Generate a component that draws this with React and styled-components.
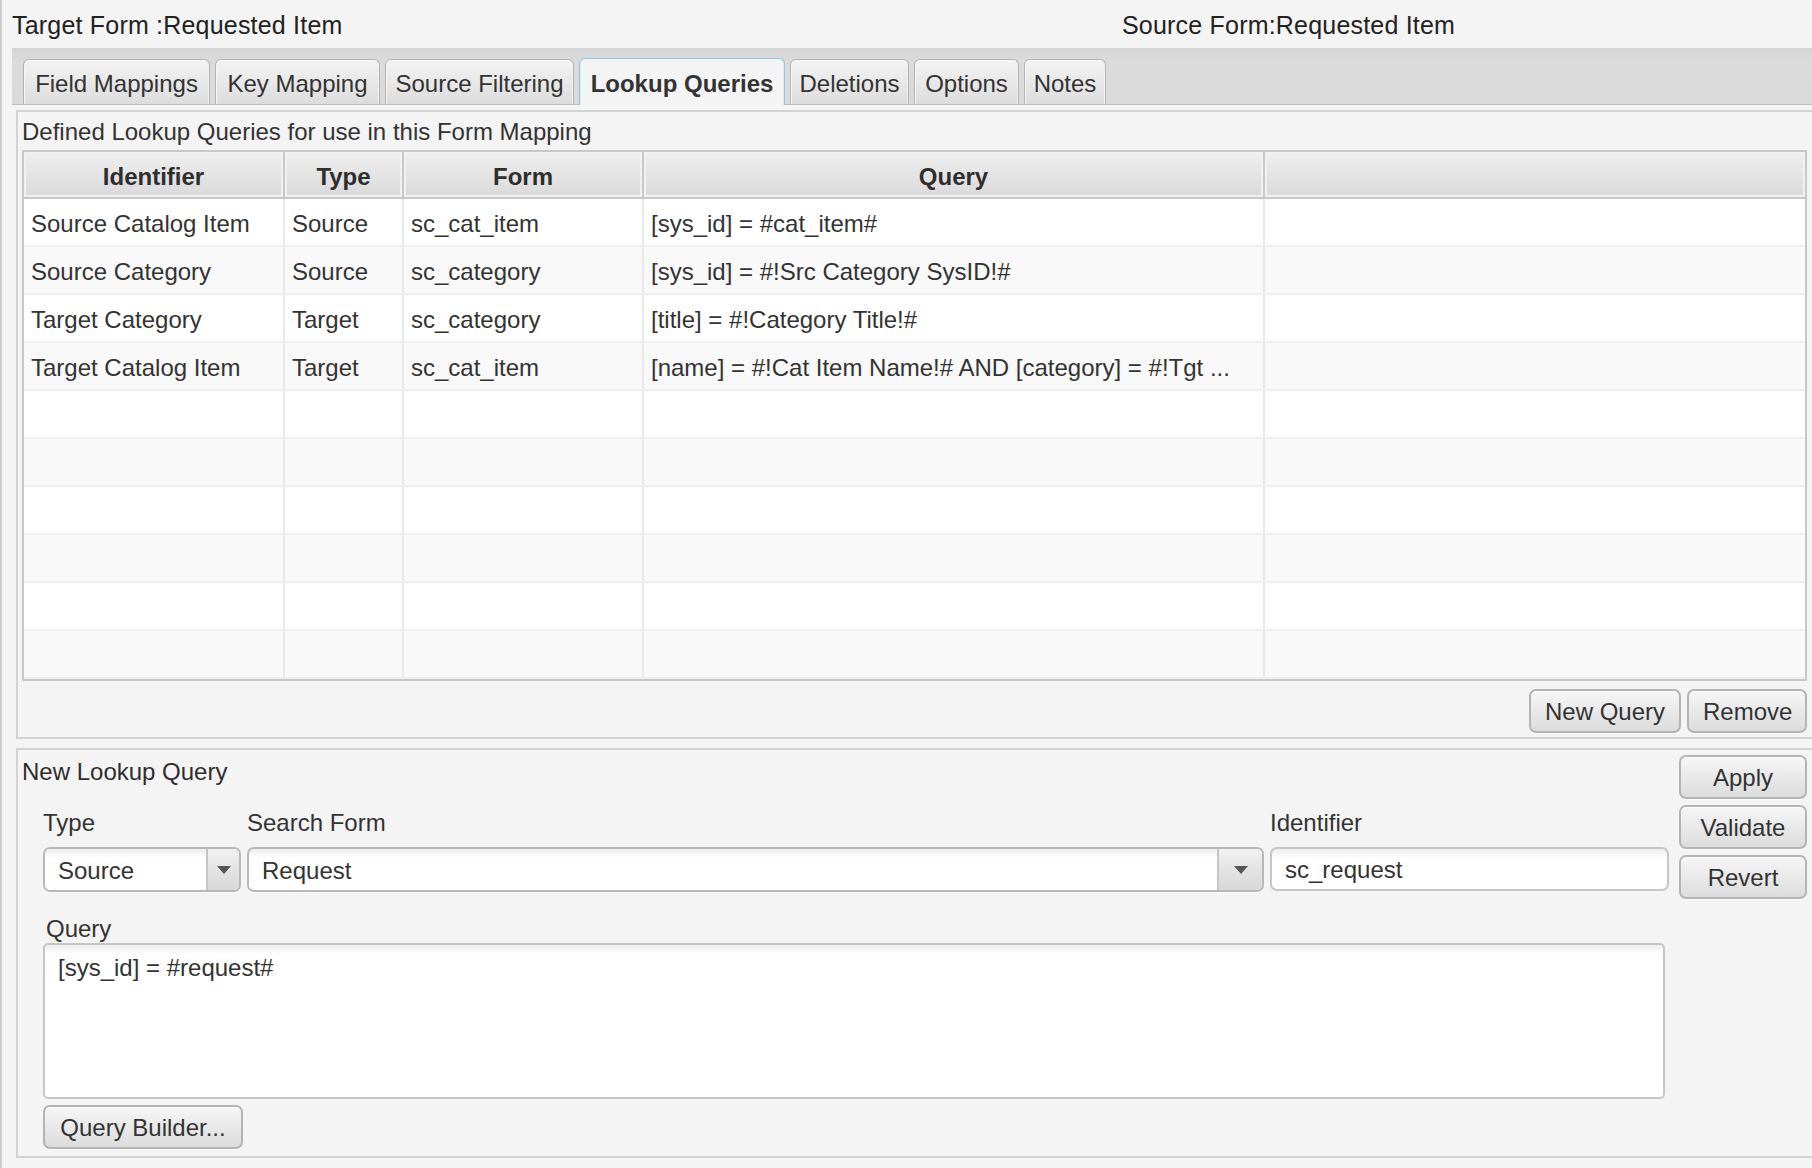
import React from "react";
import styled, { createGlobalStyle } from "styled-components";

const GlobalStyle = createGlobalStyle`
  html, body {
    margin: 0;
    padding: 0;
    background: #f4f4f4;
  }
  body {
    font-family: "Liberation Sans", Arial, Helvetica, sans-serif;
    color: #333;
  }
  * {
    box-sizing: border-box;
  }
`;

const Window = styled.div`
  width: 1812px;
  height: 1168px;
  overflow: hidden;
  border-left: 2px solid #cfcfcf;
  background: #f4f4f4;
`;

const TitleBar = styled.div`
  display: flex;
  align-items: center;
  height: 48px;
  padding: 3px 0 0 10px;
  font-size: 25px;
  color: #222;
`;

const TitleText = styled.div`
  width: ${(p) => (p.$width ? `${p.$width}px` : "auto")};
  white-space: nowrap;
  letter-spacing: 0.2px;
`;

const TabStrip = styled.div`
  display: flex;
  align-items: flex-end;
  gap: 5px;
  height: 57px;
  margin-left: 10px;
  padding-left: 11px;
  background: linear-gradient(#d4d4d4, #dbdbdb 25%, #dadada);
  border-bottom: 1px solid #bdbdbd;
`;

const Tab = styled.div`
  width: ${(p) => p.$w}px;
  height: ${(p) => (p.$active ? 47 : 45)}px;
  margin-bottom: ${(p) => (p.$active ? "-1px" : "0")};
  display: flex;
  align-items: center;
  justify-content: center;
  padding-top: 4px;
  font-size: 24px;
  font-weight: ${(p) => (p.$active ? 700 : 400)};
  color: #333;
  white-space: nowrap;
  border: 1px solid ${(p) => (p.$active ? "#94c6e3" : "#b3b3b3")};
  border-bottom: none;
  border-radius: 6px 6px 0 0;
  background: ${(p) =>
    p.$active ? "#f4f4f4" : "linear-gradient(#f3f3f3, #e6e6e6 60%, #dcdcdc)"};
  box-shadow: ${(p) =>
    p.$active
      ? "inset 1px 0 0 #d6ebf6, inset -1px 0 0 #d6ebf6"
      : "inset 0 1px 0 #fbfbfb, inset 1px 0 0 #f6f6f6, inset -1px 0 0 #f0f0f0"};
`;

const Panel = styled.section`
  margin-left: 14px;
  margin-top: ${(p) => p.$top}px;
  border: 2px solid #d2d2d2;
  border-right: none;
  background: #f4f4f4;
`;

const UpperBody = styled.div`
  padding: 0 0 4px 4px;
`;

const Caption = styled.div`
  height: 38px;
  padding-top: 4px;
  line-height: 32px;
  font-size: 24px;
  color: #333;
`;

const Table = styled.div`
  width: 1785px;
  height: 531px;
  border: 2px solid #c8c8c8;
  background: #ffffff;
  overflow: hidden;
`;

// identifier, type, form, query, filler
const COLUMNS = "261px 119px 240px 621px 540px";

const HeaderRow = styled.div`
  display: grid;
  grid-template-columns: ${COLUMNS};
  height: 47px;
  border-bottom: 2px solid #c6c6c6;
`;

const HeaderCell = styled.div`
  display: flex;
  align-items: center;
  justify-content: center;
  padding-top: 4px;
  font-size: 24px;
  font-weight: 700;
  color: #2e2e2e;
  background: linear-gradient(#efefef, #e3e3e3 55%, #d9d9d9);
  border-right: 2px solid #c9c9c9;
  box-shadow: inset 0 0 0 2px #f1f1f1;
  &:last-child {
    border-right: none;
  }
`;

const Row = styled.div`
  display: grid;
  grid-template-columns: ${COLUMNS};
  height: 48px;
  background: ${(p) => (p.$odd ? "#f9f9f9" : "#ffffff")};
  border-bottom: 2px solid #efefef;
`;

const Cell = styled.div`
  display: flex;
  align-items: center;
  padding: 3px 7px 0;
  font-size: 24px;
  color: #333;
  white-space: nowrap;
  overflow: hidden;
  border-right: 2px solid #e8e8e8;
  &:last-child {
    border-right: none;
  }
`;

const ButtonRow = styled.div`
  display: flex;
  justify-content: flex-end;
  gap: 6px;
  width: 1785px;
  margin-top: 8px;
`;

const Button = styled.button`
  height: 44px;
  width: ${(p) => (p.$w ? `${p.$w}px` : "auto")};
  padding: 2px 14px 0;
  font-family: inherit;
  font-size: 24px;
  color: #333;
  white-space: nowrap;
  border: 2px solid #b4b4b4;
  border-radius: 7px;
  background: linear-gradient(#f6f6f6, #e9e9e9 50%, #dcdcdc);
  box-shadow: inset 0 1px 0 #ffffff, 0 1px 0 #fbfbfb;
  cursor: pointer;
`;

const LowerLayout = styled.div`
  display: flex;
  width: 1789px;
  padding-bottom: 7px;
`;

const FormColumn = styled.div`
  width: 1651px;
`;

const SectionTitle = styled.div`
  height: 40px;
  line-height: 40px;
  padding: 2px 0 0 4px;
  font-size: 24px;
  color: #2e2e2e;
`;

const FieldGrid = styled.div`
  display: grid;
  grid-template-columns: 198px 1017px 399px;
  column-gap: 6px;
  row-gap: 10px;
  padding: 17px 0 0 25px;
`;

const FieldLabel = styled.div`
  height: 30px;
  line-height: 32px;
  padding-left: ${(p) => p.$indent || 0}px;
  font-size: 24px;
  color: #333;
`;

const Combo = styled.div`
  display: flex;
  height: 45px;
  border: 2px solid #b8b8b8;
  border-radius: 7px;
  background: #fff;
  overflow: hidden;
  box-shadow: 0 1px 0 #fbfbfb;
`;

const ComboValue = styled.div`
  flex: 1;
  display: flex;
  align-items: center;
  padding: 2px 0 0 13px;
  font-size: 24px;
  color: #333;
  background: linear-gradient(#ededed, #ffffff 9px);
`;

const ComboArrow = styled.div`
  width: ${(p) => p.$w}px;
  display: flex;
  align-items: center;
  justify-content: center;
  border-left: 2px solid #c6c6c6;
  background: linear-gradient(#f1f1f1, #e3e3e3 50%, #d8d8d8);
`;

const TextInput = styled.input`
  height: 44px;
  width: 100%;
  padding: 2px 13px 0;
  font-family: inherit;
  font-size: 24px;
  color: #333;
  border: 2px solid #c6c6c6;
  border-radius: 7px;
  background: linear-gradient(#ececec, #ffffff 9px);
  outline: none;
`;

const QueryArea = styled.textarea`
  display: block;
  width: 1622px;
  height: 156px;
  margin-left: 25px;
  padding: 9px 13px;
  font-family: inherit;
  font-size: 24px;
  line-height: 28px;
  color: #333;
  border: 2px solid #c6c6c6;
  border-radius: 5px;
  background: linear-gradient(#ededed, #ffffff 9px);
  resize: none;
  outline: none;
`;

const QueryLabel = styled(FieldLabel)`
  margin: 21px 0 0 25px;
`;

const BuilderWrap = styled.div`
  margin: 6px 0 0 25px;
`;

const SideButtons = styled.div`
  display: flex;
  flex-direction: column;
  gap: 6px;
  width: 128px;
  margin-left: 10px;
  padding-top: 5px;
`;

const ArrowDown = () => (
  <svg width="14" height="8" viewBox="0 0 14 8">
    <polygon points="0,0 14,0 7,8" fill="#555" />
  </svg>
);

const tabs = [
  { label: "Field Mappings", w: 187 },
  { label: "Key Mapping", w: 165 },
  { label: "Source Filtering", w: 189 },
  { label: "Lookup Queries", w: 206, active: true },
  { label: "Deletions", w: 119 },
  { label: "Options", w: 105 },
  { label: "Notes", w: 82 },
];

const queries = [
  ["Source Catalog Item", "Source", "sc_cat_item", "[sys_id] = #cat_item#"],
  ["Source Category", "Source", "sc_category", "[sys_id] = #!Src Category SysID!#"],
  ["Target Category", "Target", "sc_category", "[title] = #!Category Title!#"],
  [
    "Target Catalog Item",
    "Target",
    "sc_cat_item",
    "[name] = #!Cat Item Name!# AND [category] = #!Tgt ...",
  ],
];

const ROW_COUNT = 11;

export default function App() {
  const rows = Array.from({ length: ROW_COUNT }, (_, i) => queries[i] || ["", "", "", ""]);

  return (
    <>
      <GlobalStyle />
      <Window>
        <TitleBar>
          <TitleText $width={1110}>Target Form :Requested Item</TitleText>
          <TitleText>Source Form:Requested Item</TitleText>
        </TitleBar>

        <TabStrip>
          {tabs.map((t) => (
            <Tab key={t.label} $w={t.w} $active={t.active}>
              {t.label}
            </Tab>
          ))}
        </TabStrip>

        <Panel $top={5}>
          <UpperBody>
            <Caption>Defined Lookup Queries for use in this Form Mapping</Caption>
            <Table>
              <HeaderRow>
                <HeaderCell>Identifier</HeaderCell>
                <HeaderCell>Type</HeaderCell>
                <HeaderCell>Form</HeaderCell>
                <HeaderCell>Query</HeaderCell>
                <HeaderCell />
              </HeaderRow>
              {rows.map((r, i) => (
                <Row key={i} $odd={i % 2 === 1}>
                  <Cell>{r[0]}</Cell>
                  <Cell>{r[1]}</Cell>
                  <Cell>{r[2]}</Cell>
                  <Cell>{r[3]}</Cell>
                  <Cell />
                </Row>
              ))}
            </Table>
            <ButtonRow>
              <Button $w={152}>New Query</Button>
              <Button $w={120}>Remove</Button>
            </ButtonRow>
          </UpperBody>
        </Panel>

        <Panel $top={9}>
          <LowerLayout>
            <FormColumn>
              <SectionTitle>New Lookup Query</SectionTitle>
              <FieldGrid>
                <FieldLabel>Type</FieldLabel>
                <FieldLabel>Search Form</FieldLabel>
                <FieldLabel>Identifier</FieldLabel>

                <Combo>
                  <ComboValue>Source</ComboValue>
                  <ComboArrow $w={33}>
                    <ArrowDown />
                  </ComboArrow>
                </Combo>
                <Combo>
                  <ComboValue>Request</ComboValue>
                  <ComboArrow $w={45}>
                    <ArrowDown />
                  </ComboArrow>
                </Combo>
                <TextInput readOnly value="sc_request" />
              </FieldGrid>

              <QueryLabel $indent={3}>Query</QueryLabel>
              <QueryArea readOnly value="[sys_id] = #request#" />
              <BuilderWrap>
                <Button $w={200}>Query Builder...</Button>
              </BuilderWrap>
            </FormColumn>

            <SideButtons>
              <Button $w={128}>Apply</Button>
              <Button $w={128}>Validate</Button>
              <Button $w={128}>Revert</Button>
            </SideButtons>
          </LowerLayout>
        </Panel>
      </Window>
    </>
  );
}
